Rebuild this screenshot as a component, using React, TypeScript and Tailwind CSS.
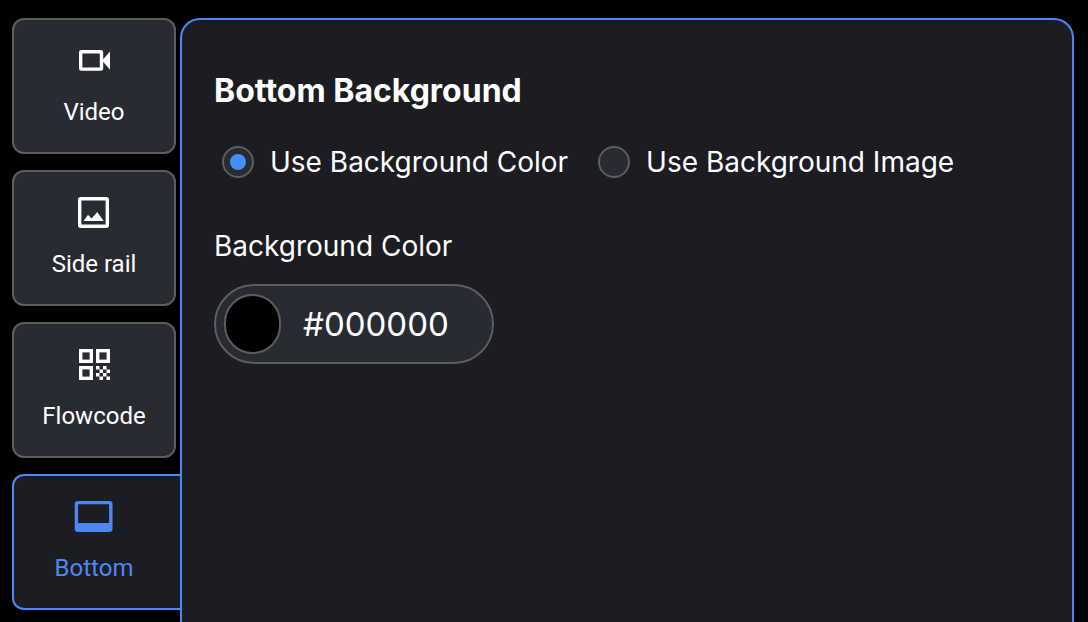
import { ReactNode, useState } from 'react';
import clsx from 'clsx';

const VideoIcon = () => (
  <svg viewBox="0 0 40 40" className="size-10" aria-hidden="true">
    <rect
      x="6.7"
      y="11.7"
      width="20.8"
      height="17.4"
      rx="0.6"
      fill="none"
      stroke="currentColor"
      strokeWidth="3.4"
    />
    <path d="M28 20.5 L36 11.5 V29.7 Z" fill="currentColor" />
  </svg>
);

const ImageIcon = () => (
  <svg viewBox="0 0 40 40" className="size-10" aria-hidden="true">
    <rect
      x="5.7"
      y="6.7"
      width="27.6"
      height="27.6"
      rx="1"
      fill="none"
      stroke="currentColor"
      strokeWidth="3.4"
    />
    <path d="M9.5 29 L14 22.8 L17.6 26.6 L23.2 20 L29.7 29 Z" fill="currentColor" />
  </svg>
);

const QrIcon = () => (
  <svg viewBox="0 0 40 40" className="size-10" aria-hidden="true">
    <g fill="none" stroke="currentColor" strokeWidth="3.4">
      <rect x="6.7" y="6.7" width="10.6" height="10.6" />
      <rect x="23.7" y="6.7" width="10.6" height="10.6" />
      <rect x="6.7" y="23.7" width="10.6" height="10.6" />
    </g>
    <path
      fill="currentColor"
      d="M22 22h3.5v3.5h-3.5zM29 22h3.5v3.5h-3.5zM25.5 25.5h3.5v3.5h-3.5zM32.5 25.5h3.5v3.5h-3.5zM22 29h3.5v3.5h-3.5zM29 29h3.5v3.5h-3.5zM25.5 32.5h3.5v3.5h-3.5zM32.5 32.5h3.5v3.5h-3.5z"
    />
  </svg>
);

const BottomIcon = () => (
  <svg viewBox="0 0 40 40" className="size-10" aria-hidden="true">
    <rect
      x="2.4"
      y="6.6"
      width="34.4"
      height="27.8"
      rx="1.6"
      fill="none"
      stroke="currentColor"
      strokeWidth="3.4"
    />
    <path d="M3 27h34v8H3z" fill="currentColor" />
  </svg>
);

const tabs = [
  { name: 'Video', icon: <VideoIcon /> },
  { name: 'Side rail', icon: <ImageIcon /> },
  { name: 'Flowcode', icon: <QrIcon /> },
  { name: 'Bottom', icon: <BottomIcon /> },
];

type TabButtonProps = {
  name: string;
  icon: ReactNode;
  active: boolean;
  onClick: () => void;
};

const TabButton = ({ name, icon, active, onClick }: TabButtonProps) => (
  <button
    role="tab"
    aria-selected={active}
    onClick={onClick}
    className={clsx(
      'flex h-34 flex-col items-center gap-4 border-2 pt-5 font-[Roboto,sans-serif] text-2xl leading-8',
      active
        ? 'w-42 rounded-l-xl border-r-0 border-[#4f87f2] bg-[#1c1d22] pr-1.5 text-[#4f87f2]'
        : 'w-41 rounded-xl border-[#5c5d61] bg-[#292b33] text-white'
    )}
  >
    {icon}
    {name}
  </button>
);

type RadioProps = {
  label: string;
  checked: boolean;
  onChange: () => void;
};

const Radio = ({ label, checked, onChange }: RadioProps) => (
  <label className="flex items-center gap-4">
    <input
      type="radio"
      name="background"
      checked={checked}
      onChange={onChange}
      className="grid size-8 shrink-0 appearance-none place-items-center rounded-full border-2 border-[#5c5d61] bg-[#292b33] before:size-4 before:rounded-full checked:before:bg-[#448ffc]"
    />
    {label}
  </label>
);

export default function App() {
  const [tab, setTab] = useState('Bottom');
  const [mode, setMode] = useState('color');
  const [color, setColor] = useState('#000000');

  return (
    <main className="flex h-screen overflow-hidden bg-black pt-4.5 pr-3.5 pl-3 font-[Inter,sans-serif] text-white">
      <div role="tablist" className="flex w-42 shrink-0 flex-col gap-4">
        {tabs.map(({ name, icon }) => (
          <TabButton
            key={name}
            name={name}
            icon={icon}
            active={tab === name}
            onClick={() => setTab(name)}
          />
        ))}
      </div>

      <section className="min-w-0 flex-1 rounded-t-[20px] border-2 border-b-0 border-[#4f87f2] bg-[#1c1d22] px-8 pt-12 text-[28px] leading-10">
        <h1 className="text-[32px] leading-[46px] font-bold">
          Bottom Background
        </h1>

        <div className="mt-7 ml-2 flex flex-wrap gap-x-7.5 gap-y-4">
          <Radio
            label="Use Background Color"
            checked={mode === 'color'}
            onChange={() => setMode('color')}
          />
          <Radio
            label="Use Background Image"
            checked={mode === 'image'}
            onChange={() => setMode('image')}
          />
        </div>

        <label htmlFor="color" className="mt-11 block">
          Background Color
        </label>
        <div className="mt-4.5 flex h-20 w-70 items-center rounded-full border-2 border-[#5c5d61] bg-[#292b33] px-2">
          <span
            className="h-15 w-[57px] shrink-0 rounded-full border-2 border-[#5c5d61]"
            style={{ backgroundColor: color }}
          />
          <input
            id="color"
            type="text"
            value={color}
            onChange={(e) => setColor(e.target.value)}
            className="ml-5.5 w-full min-w-0 bg-transparent text-[33px] outline-none"
          />
        </div>
      </section>
    </main>
  );
}
